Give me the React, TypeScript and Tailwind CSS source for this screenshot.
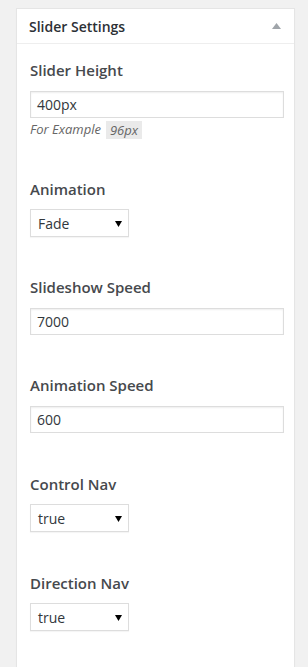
import React from "react";

const font = { fontFamily: '"Open Sans", "Noto Sans", sans-serif' };

function Label({ children }: { children: React.ReactNode }) {
  return (
    <div className="text-[15px] leading-[20px] font-semibold text-[#46494d]">{children}</div>
  );
}

function TextInput({ value }: { value: string }) {
  return (
    <div className="mt-[11px] h-[27px] w-[254px] border border-[#dddddd] bg-white shadow-[inset_0_1px_2px_rgba(0,0,0,0.07)] flex items-center pl-[6px] text-[14px] text-[#32373c]">
      {value}
    </div>
  );
}

function Select({ value }: { value: string }) {
  return (
    <div className="mt-[10px] h-[28px] w-[99px] border border-[#dddddd] bg-white shadow-[0_1px_1px_rgba(0,0,0,0.04)] flex items-center justify-between pl-[7px] pr-[6px] text-[14px] text-[#32373c]">
      <span>{value}</span>
      <svg width="7" height="6" viewBox="0 0 7 6" className="mt-[1px]">
        <polygon points="0,0 7,0 3.5,6" fill="#000" />
      </svg>
    </div>
  );
}

export default function App() {
  return (
    <div className="min-h-screen bg-[#f1f1f1] pl-[16px] pt-[8px] overflow-hidden" style={font}>
      <div className="w-[279px] h-[680px] bg-white border border-[#e5e5e5] shadow-[0_1px_1px_rgba(0,0,0,0.04)]">
        <div className="h-[35px] border-b border-[#eeeeee] flex items-center justify-between pl-[12px] pr-[13px]">
          <span className="text-[14px] font-semibold text-[#2c3035]">Slider Settings</span>
          <svg width="9" height="6" viewBox="0 0 9 6">
            <polygon points="4.5,0 9,6 0,6" fill="#a0a5aa" />
          </svg>
        </div>
        <div className="px-[13px] pt-[16px]">
          <Label>Slider Height</Label>
          <TextInput value="400px" />
          <div className="mt-[3px] h-[18px] flex items-center text-[13px] italic text-[#666]">
            <span>For Example</span>
            <span className="ml-[5px] bg-[#eaeaea] px-[4px] h-[18px] leading-[18px] text-[13px] text-[#666]">96px</span>
          </div>

          <div className="mt-[40px]">
            <Label>Animation</Label>
            <Select value="Fade" />
          </div>

          <div className="mt-[40px]">
            <Label>Slideshow Speed</Label>
            <TextInput value="7000" />
          </div>

          <div className="mt-[40px]">
            <Label>Animation Speed</Label>
            <TextInput value="600" />
          </div>

          <div className="mt-[41px]">
            <Label>Control Nav</Label>
            <Select value="true" />
          </div>

          <div className="mt-[41px]">
            <Label>Direction Nav</Label>
            <Select value="true" />
          </div>
        </div>
      </div>
    </div>
  );
}
